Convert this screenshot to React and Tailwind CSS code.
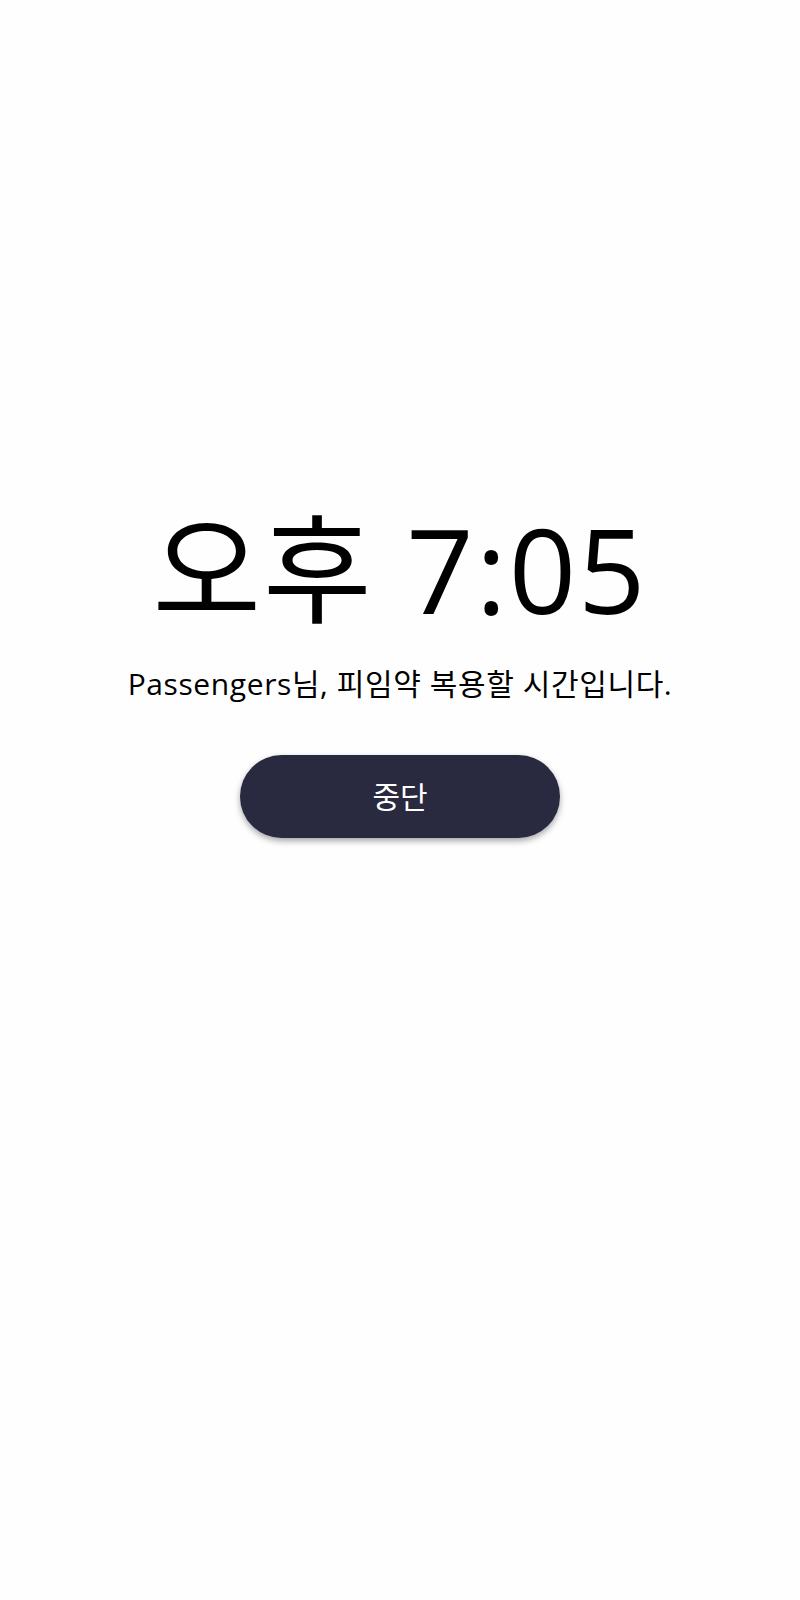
import React from 'react';

export default function App() {
  return (
    <div className="min-h-screen w-full bg-[#fefefe] flex flex-col items-center pt-[504px] font-['Open_Sans','Noto_Sans_CJK_KR',sans-serif] text-black">
      {/* alarm time */}
      <div className="text-[118px] leading-none tracking-[2px] py-[6px]">오후 7:05</div>

      {/* message */}
      <p className="mt-[32px] text-[30px] leading-[36px] tracking-[0.6px]">Passengers님, 피임약 복용할 시간입니다.</p>

      {/* stop button */}
      <button className="mt-[53px] w-[320px] h-[83px] rounded-full bg-[#292a3f] text-white text-[30px] shadow-[0_3px_6px_rgba(0,0,0,0.35)]">
        중단
      </button>
    </div>
  );
}
